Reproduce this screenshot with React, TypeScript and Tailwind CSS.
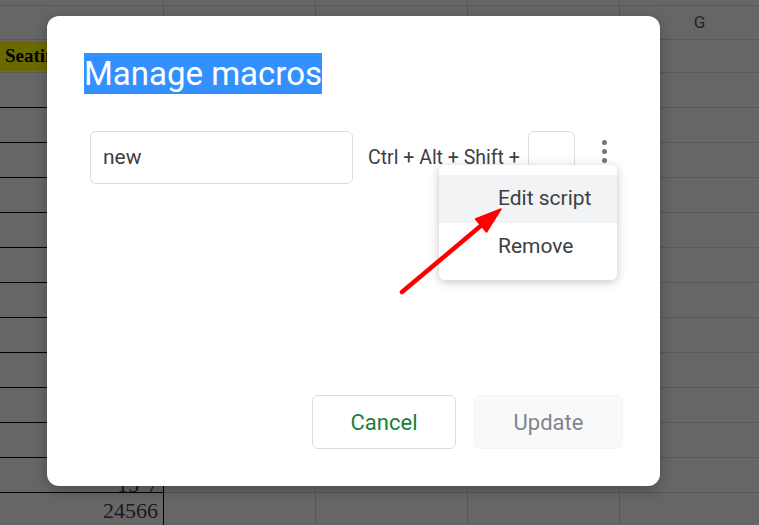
import React from "react";

const cols = ["w-[164px]", "w-[152px]", "w-[152px]", "w-[152px]", "w-[160px]"];

function SheetRow({ h, first }: { h: string; first?: React.ReactNode }) {
  return (
    <div className={`flex ${h}`}>
      <div className={`${cols[0]} shrink-0 border-b border-r border-b-black border-r-black relative overflow-hidden`}>
        {first}
      </div>
      {cols.slice(1).map((c, i) => (
        <div key={i} className={`${c} shrink-0 border-b border-r border-[#585858]`} />
      ))}
    </div>
  );
}

function Sheet() {
  const rows = Array.from({ length: 11 });
  return (
    <div className="w-[759px] h-[525px] overflow-hidden bg-[#666] text-[#222]">
      {/* top strip */}
      <div className="flex h-[6px]">
        {cols.map((c, i) => (
          <div key={i} className={`${c} shrink-0 border-b border-r border-[#585858]`} />
        ))}
      </div>
      {/* column header row */}
      <div className="flex h-[34px]">
        {cols.map((c, i) => (
          <div
            key={i}
            className={`${c} shrink-0 border-b border-r border-[#585858] flex items-center justify-center text-[17px] font-['Roboto',sans-serif] text-[#222]`}
          >
            {i === 4 ? "G" : ""}
          </div>
        ))}
      </div>
      {/* row 1 with yellow header cell */}
      <div className="flex h-[33px]">
        <div className={`${cols[0]} shrink-0 border-b border-r border-[#585858] pt-[1px]`}>
          <div className="h-[30px] bg-[#6b6a00] pl-[5px] font-['Liberation_Serif',serif] font-bold text-[19px] leading-[30px] text-black">
            Seating
          </div>
        </div>
        {cols.slice(1).map((c, i) => (
          <div key={i} className={`${c} shrink-0 border-b border-r border-[#585858]`} />
        ))}
      </div>
      {rows.map((_, i) => (
        <SheetRow key={i} h="h-[35px]" />
      ))}
      <SheetRow
        h="h-[35px]"
        first={
          <div className="h-full flex items-end justify-end pr-[5px] translate-y-[6px] font-['Liberation_Serif',serif] text-[22px] leading-[26px] text-[#1a1a1a]">
            15''7
          </div>
        }
      />
      <SheetRow
        h="h-[35px]"
        first={
          <div className="h-[33px] flex items-center justify-end pr-[5px] pt-[2px] font-['Liberation_Serif',serif] text-[22px] text-[#1a1a1a]">
            24566
          </div>
        }
      />
    </div>
  );
}

export default function App() {
  return (
    <div className="relative w-[759px] h-[525px] overflow-hidden font-['Roboto',sans-serif]">
      <Sheet />

      {/* Manage macros dialog */}
      <div className="absolute left-[47px] top-[16px] w-[613px] h-[470px] bg-white rounded-[12px] shadow-[0_4px_14px_rgba(0,0,0,0.25)] flex flex-col">
        <div className="pl-[37px] pt-[37px]">
          <span className="inline-block h-[41px] bg-[#3391ff] text-white text-[33px] leading-[41px]">
            Manage macros
          </span>
        </div>

        <div className="flex items-center pl-[43px] mt-[37px]">
          <div className="w-[263px] h-[53px] border border-[#dadce0] rounded-[6px] flex items-center pl-[12px] text-[21px] text-[#3c4043]">
            new
          </div>
          <span className="ml-[15px] text-[19.5px] text-[#3c4043]">Ctrl + Alt + Shift +</span>
          <div className="ml-[8px] w-[47px] h-[53px] border border-[#dadce0] rounded-[6px]" />
          <div className="ml-[27px] flex flex-col gap-[4px] -mt-[12px]">
            <span className="w-[5px] h-[5px] rounded-full bg-[#757575]" />
            <span className="w-[5px] h-[5px] rounded-full bg-[#757575]" />
            <span className="w-[5px] h-[5px] rounded-full bg-[#757575]" />
          </div>
        </div>

        <div className="mt-auto flex justify-end gap-[18px] pr-[37px] pb-[37px]">
          <button className="w-[144px] h-[54px] border border-[#dadce0] rounded-[6px] text-[22px] text-[#188038] bg-white">
            Cancel
          </button>
          <button className="w-[149px] h-[54px] rounded-[6px] text-[22px] text-[#80868b] bg-[#f8f9fa] border border-[#f3f4f5]">
            Update
          </button>
        </div>

        {/* context menu */}
        <div className="absolute left-[392px] top-[149px] w-[178px] h-[115px] bg-white rounded-[6px] shadow-[0_2px_10px_rgba(60,64,67,0.3)] py-[10px]">
          <div className="h-[48px] bg-[#f1f3f4] flex items-center pl-[59px] text-[21px] text-[#3c4043]">
            Edit script
          </div>
          <div className="h-[48px] flex items-center pl-[59px] text-[21px] text-[#3c4043]">
            Remove
          </div>
        </div>
      </div>

      {/* red annotation arrow */}
      <svg className="absolute left-0 top-0" width="759" height="525" viewBox="0 0 759 525">
        <line x1="402" y1="292" x2="483" y2="224" stroke="#ff0000" strokeWidth="4.5" strokeLinecap="round" />
        <polygon points="501,209 486.5,232 475.5,219" fill="#ff0000" stroke="#ff0000" strokeWidth="1.5" strokeLinejoin="round" />
      </svg>
    </div>
  );
}
